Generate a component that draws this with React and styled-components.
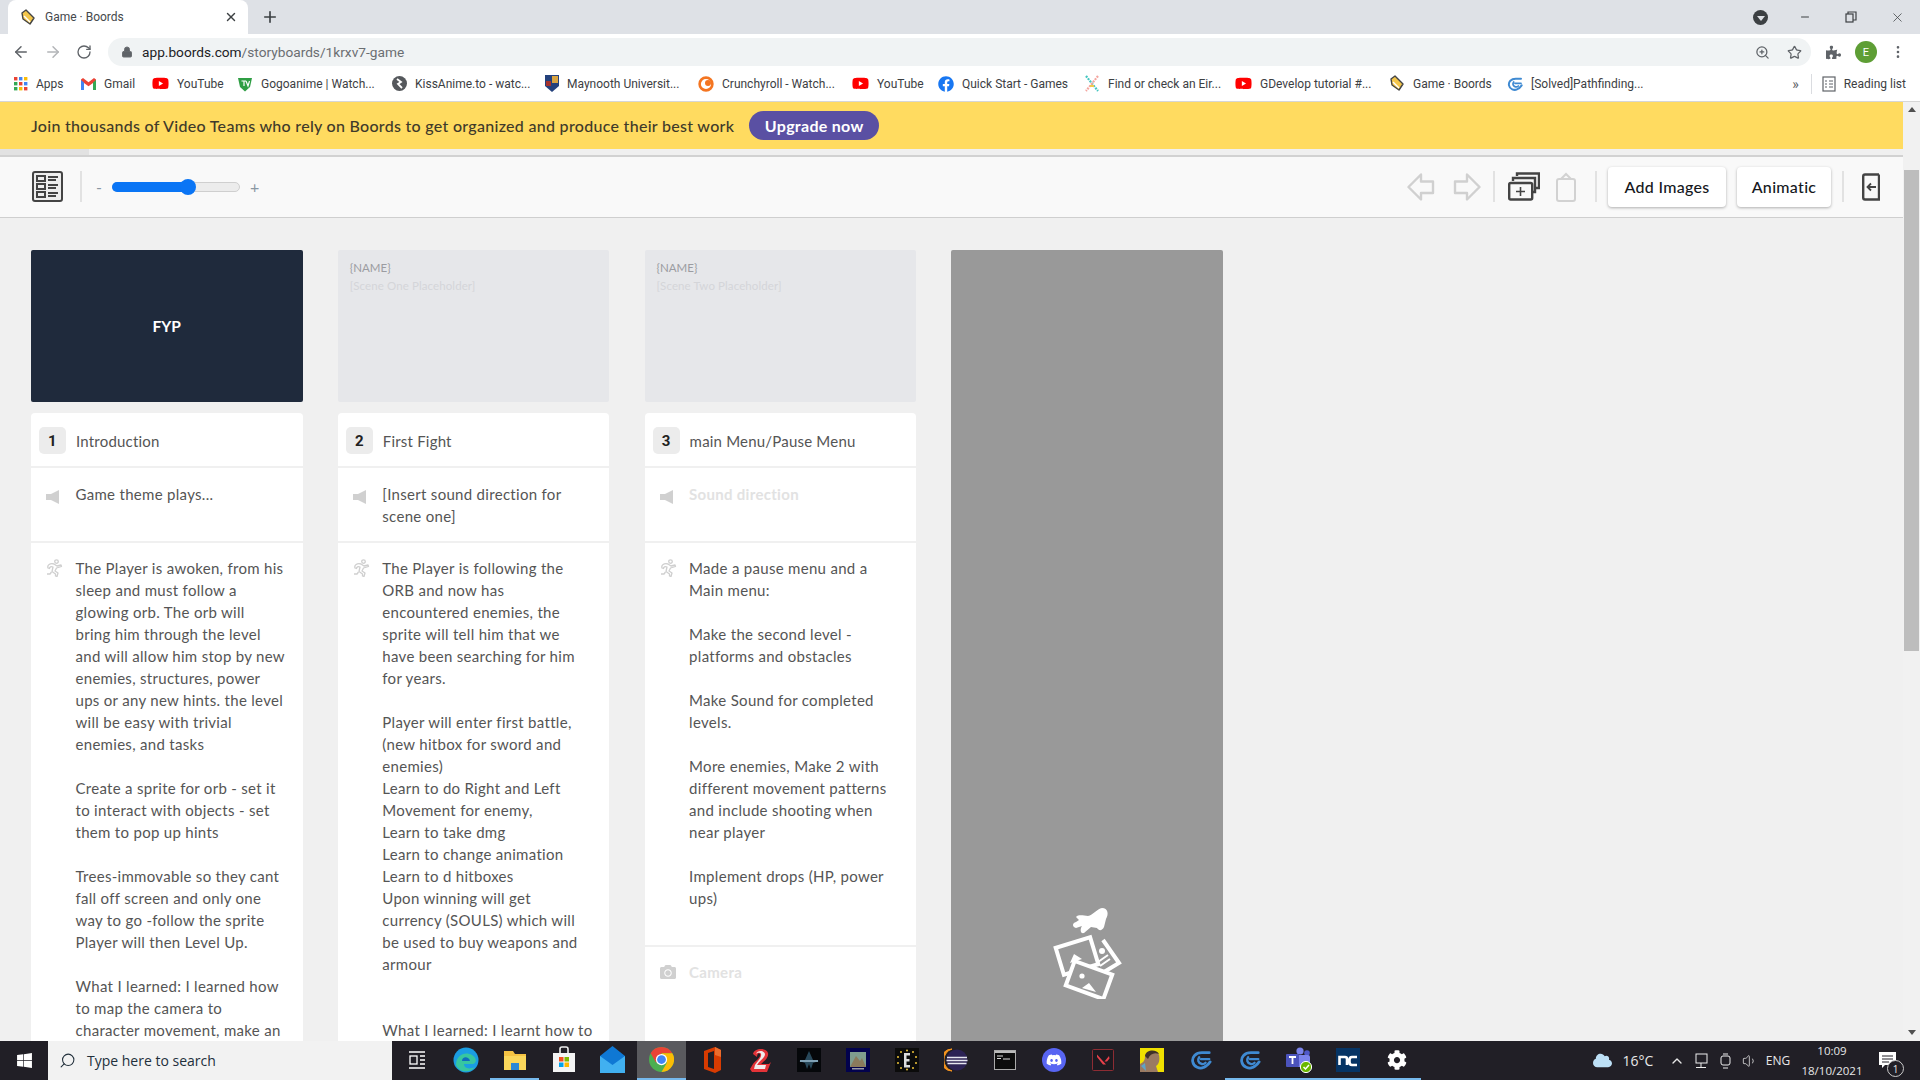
import React from "react";
import styled, { createGlobalStyle } from "styled-components";
import { ArrowLeft, ArrowRight, RotateCw, Lock, Star, ZoomIn, MoreVertical, Plus, X, Minus, Search, ChevronUp, Volume1 } from "lucide-react";
import { FaWindows, FaDiscord, FaFacebook, FaPuzzlePiece, FaCloud, FaCamera, FaYoutube, FaCog } from "react-icons/fa";

const GlobalStyle = createGlobalStyle`
    html, body {
        margin: 0;
        height: 100%;
        overflow: hidden;
        background: #f0f0f0;
    }
    * { box-sizing: border-box; }
`;

const Screen = styled.div`
    width: 1920px;
    height: 1080px;
    display: flex;
    flex-direction: column;
    overflow: hidden;
    font-family: Roboto, "Liberation Sans", sans-serif;
`;

/* browser chrome */
const TabStrip = styled.div`
    height: 34px;
    flex: none;
    background: #dee1e6;
    display: flex;
    align-items: flex-end;
    padding-left: 8px;
`;

const Tab = styled.div`
    width: 240px;
    height: 34px;
    background: #fff;
    border-radius: 8px 8px 0 0;
    display: flex;
    align-items: center;
    padding: 0 10px 0 12px;
    gap: 9px;
    font-size: 12px;
    color: #45484c;
`;

const TabTitle = styled.span`
    flex: 1;
`;

const NewTab = styled.div`
    width: 44px;
    height: 34px;
    display: flex;
    align-items: center;
    justify-content: center;
    color: #3c4043;
`;

const WindowControls = styled.div`
    margin-left: auto;
    height: 34px;
    display: flex;
    align-items: center;
    color: #3c4043;
`;

const ProfileDot = styled.div`
    width: 15px;
    height: 15px;
    border-radius: 50%;
    background: #3c4043;
    margin-right: 14px;
    display: flex;
    align-items: center;
    justify-content: center;
    &::after {
        content: "";
        border-left: 4px solid transparent;
        border-right: 4px solid transparent;
        border-top: 5px solid #dee1e6;
        margin-top: 2px;
    }
`;

const WinButton = styled.div`
    width: 46px;
    display: flex;
    justify-content: center;
`;

const NavBar = styled.div`
    height: 34px;
    flex: none;
    background: #fff;
    display: flex;
    align-items: center;
    padding: 2px 8px 0 12px;
    color: #5f6368;
`;

const NavIcon = styled.div`
    width: 32px;
    display: flex;
    color: ${(p) => (p.$off ? "#b3b5b8" : "#5f6368")};
`;

const Omnibox = styled.div`
    width: 1703px;
    height: 28px;
    border-radius: 14px;
    background: #f0f3f4;
    display: flex;
    align-items: center;
    padding: 0 9px 0 13px;
    font-size: 13.7px;
    color: #6b6e72;
`;

const Host = styled.span`
    color: #202124;
`;

const Url = styled.span`
    flex: 1;
    margin-left: 9px;
`;

const OmniIcon = styled.div`
    display: flex;
    margin-left: ${(p) => p.$ml}px;
    color: #5f6368;
`;

const Avatar = styled.div`
    width: 22px;
    height: 22px;
    border-radius: 50%;
    background: #5e9e35;
    color: #fff;
    font-size: 11px;
    display: flex;
    align-items: center;
    justify-content: center;
    margin: 0 13px 0 14px;
`;

const Bookmarks = styled.div`
    height: 34px;
    flex: none;
    background: #fff;
    display: flex;
    align-items: center;
    padding: 0 0 2px 14px;
    font-size: 12px;
    color: #3c4043;
    border-bottom: 1px solid #d6d6d6;
`;

const Bookmark = styled.div`
    width: ${(p) => p.$w}px;
    flex: none;
    display: flex;
    align-items: center;
    gap: 8px;
    white-space: nowrap;
`;

const BookmarkEnd = styled.div`
    margin-left: auto;
    display: flex;
    align-items: center;
    gap: 8px;
    padding-right: 14px;
`;

const Chevrons = styled.span`
    font-size: 14px;
    color: #5f6368;
    margin-right: 2px;
`;

const BarDivider = styled.div`
    width: 1px;
    height: 20px;
    background: #dadce0;
    margin: 0 2px;
`;

/* page */
const PageRow = styled.div`
    flex: 1;
    min-height: 0;
    display: flex;
`;

const Page = styled.div`
    flex: 1;
    min-width: 0;
    display: flex;
    flex-direction: column;
    font-family: Lato, "Open Sans", sans-serif;
`;

const Banner = styled.div`
    height: 47px;
    flex: none;
    background: #ffdb60;
    display: flex;
    align-items: center;
    padding-left: 31px;
    gap: 15px;
    font-size: 16px;
    font-weight: 500;
    letter-spacing: 0.29px;
    color: #3f3a2a;
`;

const Upgrade = styled.div`
    width: 130px;
    height: 29px;
    border-radius: 15px;
    background: #5a50a3;
    color: #fff;
    font-weight: 700;
    display: flex;
    align-items: center;
    justify-content: center;
`;

const SubNav = styled.div`
    height: 8px;
    flex: none;
    background: #f0f0f0;
    border-bottom: 2px solid #d2d2d2;
`;

const SubNavTab = styled.div`
    width: 89px;
    height: 6px;
    background: #e2e2e2;
`;

const Toolbar = styled.div`
    height: 61px;
    flex: none;
    background: #f9f9f9;
    border-bottom: 1px solid #cfcfcf;
    display: flex;
    align-items: center;
    padding: 0 0 1px 32px;
`;

const ToolDivider = styled.div`
    width: 2px;
    height: 31px;
    background: #e2e2e2;
    margin: ${(p) => p.$m || "0"};
`;

const ZoomMark = styled.span`
    font-size: 16px;
    color: #8a97a3;
    width: ${(p) => p.$w}px;
    margin-left: ${(p) => p.$ml || 0}px;
`;

const SliderTrack = styled.div`
    width: 128px;
    height: 10px;
    border-radius: 5px;
    background: #ececec;
    border: 1px solid #cfcfcf;
    position: relative;
`;

const SliderFill = styled.div`
    height: 10px;
    margin: -1px;
    border-radius: 5px;
    background: #0a75f5;
`;

const SliderThumb = styled.div`
    position: absolute;
    left: 67px;
    top: -4px;
    width: 16px;
    height: 16px;
    border-radius: 50%;
    background: #0a75f5;
`;

const ToolRight = styled.div`
    margin-left: auto;
    display: flex;
    align-items: center;
    padding-right: 23px;
`;

const ToolIcon = styled.div`
    display: flex;
    margin: ${(p) => p.$m || "0"};
`;

const ToolButton = styled.div`
    height: 40px;
    width: ${(p) => p.$w}px;
    background: #fff;
    border-radius: 4px;
    box-shadow: 0 1px 3px rgba(0, 0, 0, 0.3);
    display: flex;
    align-items: center;
    justify-content: center;
    font-size: 16px;
    font-weight: 500;
    letter-spacing: 0.3px;
    color: #16181d;
    margin: ${(p) => p.$m || "0"};
`;

const Board = styled.div`
    flex: 1;
    min-height: 0;
    overflow: hidden;
    display: flex;
    align-items: flex-start;
    gap: 35.3px;
    padding: 32px 0 0 31px;
    background: #f0f0f0;
`;

const Frame = styled.div`
    width: 271.5px;
    flex: none;
`;

const ImageBox = styled.div`
    height: 152px;
    border-radius: 2px;
    background: ${(p) => (p.$dark ? "#1f2a3c" : "#e6e7ea")};
    color: #fff;
    display: flex;
    flex-direction: column;
    align-items: ${(p) => (p.$dark ? "center" : "flex-start")};
    justify-content: ${(p) => (p.$dark ? "center" : "flex-start")};
    padding: ${(p) => (p.$dark ? "0" : "9px 12px")};
    font-size: 15.5px;
    font-weight: 700;
`;

const PlaceName = styled.div`
    font-size: 11.5px;
    font-weight: 400;
    color: #9b9ca1;
    line-height: 18px;
`;

const PlaceScene = styled.div`
    font-size: 11.5px;
    letter-spacing: 0.1px;
    font-weight: 400;
    color: #d4d5d9;
    line-height: 18px;
`;

const CardStack = styled.div`
    margin-top: 11px;
    display: flex;
    flex-direction: column;
    gap: 2px;
`;

const NameRow = styled.div`
    height: 53px;
    background: #fff;
    border-radius: 4px 4px 0 0;
    display: flex;
    align-items: center;
    padding: 2px 0 0 8px;
    gap: 10px;
    font-size: 15px;
    letter-spacing: 0.2px;
    color: #555;
`;

const Badge = styled.div`
    width: 27px;
    height: 27px;
    border-radius: 5px;
    background: #ececec;
    color: #222;
    font-size: 15px;
    font-weight: 700;
    font-family: Roboto, sans-serif;
    display: flex;
    align-items: center;
    justify-content: center;
`;

const Field = styled.div`
    background: #fff;
    min-height: ${(p) => p.$h}px;
    display: flex;
    padding: ${(p) => p.$pt}px 8px 12px 15px;
`;

const FieldIcon = styled.div`
    width: 29.5px;
    flex: none;
    color: #d0d0d0;
    padding-top: ${(p) => p.$pt || 2}px;
`;

const FieldText = styled.div`
    font-size: 15px;
    line-height: 22px;
    letter-spacing: 0.3px;
    color: ${(p) => (p.$empty ? "#e2e2e2" : "#555")};
    font-weight: ${(p) => (p.$empty ? 700 : 400)};
    white-space: pre-line;
    flex: 1;
`;

const DropZone = styled.div`
    width: 271.5px;
    flex: none;
    height: 900px;
    background: #999;
    border-radius: 2px;
    padding-top: 657px;
    display: flex;
    justify-content: center;
`;

/* scrollbar */
const ScrollBar = styled.div`
    width: 17px;
    flex: none;
    background: #f1f1f1;
    display: flex;
    flex-direction: column;
    align-items: center;
    position: relative;
`;

const ScrollArrow = styled.div`
    position: absolute;
    ${(p) => (p.$down ? "bottom: 6px;" : "top: 5px;")}
    border-left: 4px solid transparent;
    border-right: 4px solid transparent;
    ${(p) => (p.$down ? "border-top: 5px solid #505050;" : "border-bottom: 5px solid #505050;")}
`;

const ScrollThumb = styled.div`
    width: 15px;
    height: 481px;
    margin-top: 68px;
    background: #bdbdbd;
`;

/* taskbar */
const Taskbar = styled.div`
    height: 39px;
    flex: none;
    background: #211f26;
    display: flex;
    align-items: stretch;
    color: #fff;
    font-family: "Open Sans", Roboto, sans-serif;
`;

const StartButton = styled.div`
    width: 48px;
    display: flex;
    align-items: center;
    justify-content: center;
`;

const SearchBox = styled.div`
    width: 344px;
    background: #f2f2f2;
    display: flex;
    align-items: center;
    padding-left: 11px;
    gap: 11px;
    color: #22303c;
    font-size: 14px;
`;

const Slot = styled.div`
    width: 49px;
    flex: none;
    display: flex;
    align-items: center;
    justify-content: center;
    position: relative;
    background: ${(p) => (p.$active ? "#5a5a5e" : "transparent")};
    border-bottom: 2px solid ${(p) => (p.$open || p.$active ? "#76b9ed" : "transparent")};
`;

const DiscordBadge = styled.span`
    width: 24px;
    height: 24px;
    border-radius: 50%;
    background: #5865f2;
    display: flex;
    align-items: center;
    justify-content: center;
`;

const Tray = styled.div`
    margin-left: auto;
    display: flex;
    align-items: center;
    padding-right: 16px;
    font-size: 12px;
    color: #e8e8e8;
`;

const TrayItem = styled.div`
    display: flex;
    align-items: center;
    justify-content: center;
    width: ${(p) => p.$w}px;
    font-size: ${(p) => p.$fs || 12}px;
`;

const Clock = styled.div`
    width: 76px;
    text-align: center;
    font-size: 11.5px;
    line-height: 20px;
`;

const Notify = styled.div`
    width: 34px;
    display: flex;
    justify-content: center;
    position: relative;
`;

const NotifyCount = styled.div`
    position: absolute;
    right: 0;
    bottom: -8px;
    width: 17px;
    height: 17px;
    border-radius: 50%;
    border: 1px solid #ccc;
    background: #211f26;
    font-size: 10px;
    display: flex;
    align-items: center;
    justify-content: center;
`;

/* drawn favicons */
const BoordsIcon = () => (
    <svg width="16" height="17" viewBox="0 0 16 17">
        <path d="M6 1 L14 9 L10 15 L3 10 L2 4 Z" fill="#f4c64a" stroke="#444" strokeWidth="1.4" strokeLinejoin="round" />
        <path d="M4 7 L10 13" stroke="#fff" strokeWidth="1.4" />
    </svg>
);

const AppsIcon = () => (
    <svg width="14" height="14" viewBox="0 0 14 14">
        {[0, 5, 10].map((y, r) =>
            [0, 5, 10].map((x, c) => (
                <rect key={x + "-" + y} x={x} y={y} width="3.4" height="3.4" fill={["#ea4335", "#4285f4", "#fbbc05", "#34a853", "#ea4335", "#4285f4", "#34a853", "#fbbc05", "#ea4335"][r * 3 + c]} />
            ))
        )}
    </svg>
);

const GmailIcon = () => (
    <svg width="15" height="12" viewBox="0 0 15 12">
        <path d="M0 1.5 V12 H3 V5 L7.5 8.3 L12 5 V12 H15 V1.5 L13 0 L7.5 4.2 L2 0 Z" fill="#ea4335" />
        <path d="M0 12 V2 L3 4.5 V12 Z" fill="#4285f4" />
        <path d="M15 12 V2 L12 4.5 V12 Z" fill="#34a853" />
    </svg>
);

const YtIcon = () => <FaYoutube size={17} color="#f00" />;

const ShieldIcon = () => (
    <svg width="16" height="16" viewBox="0 0 16 16">
        <path d="M1 2 H15 L13 11 L8 15.5 L3 11 Z" fill="#2f9e44" />
        <path d="M4.5 5 H9 M7 5 V10 M9 5 L11 10 L12.5 5" stroke="#fff" strokeWidth="1.2" fill="none" />
    </svg>
);

const KissIcon = () => (
    <svg width="15" height="15" viewBox="0 0 15 15">
        <circle cx="7.5" cy="7.5" r="7.5" fill="#55585c" />
        <path d="M5 3 L9 6 L6 8 L10 12" stroke="#fff" strokeWidth="1.8" fill="none" />
    </svg>
);

const CrestIcon = () => (
    <svg width="14" height="17" viewBox="0 0 14 17">
        <path d="M0 0 H14 V11 L7 17 L0 11 Z" fill="#24417c" />
        <rect x="7" y="1" width="6" height="7" fill="#d9a441" />
        <rect x="1" y="6" width="5" height="5" fill="#a5332d" />
    </svg>
);

const CrunchyIcon = () => (
    <svg width="16" height="16" viewBox="0 0 16 16">
        <circle cx="8" cy="8" r="6.4" fill="none" stroke="#f47521" strokeWidth="2.6" />
        <circle cx="10" cy="7" r="3" fill="#f47521" />
    </svg>
);

const EircodeIcon = () => (
    <svg width="16" height="17" viewBox="0 0 16 17">
        <path d="M2 1 L14 16" stroke="#45c6c0" strokeWidth="2.2" strokeDasharray="2 1" />
        <path d="M14 1 L2 16" stroke="#f4a6a0" strokeWidth="2.2" strokeDasharray="2 1" />
        <path d="M6 11 L10 11" stroke="#f4c94a" strokeWidth="2" />
    </svg>
);

const GDevelopIcon = ({ size = 16 }) => (
    <svg width={size} height={size} viewBox="0 0 24 24" fill="none" stroke="#3f8ad2" strokeWidth="3" strokeLinecap="round">
        <path d="M21 4 H13 C6 4 2 9 3 14 C4 20 11 22 15 20 C18 19 20 17 22 14" />
        <path d="M12 11 H21 M10 9 C8 12 9 15 12 16 C14 17 16 16 17 15" strokeWidth="2.6" />
    </svg>
);

const ViewIcon = () => (
    <svg width="31" height="31" viewBox="0 0 31 31" fill="none">
        <rect x="1" y="1" width="29" height="29" rx="2" fill="#eee" stroke="#444" strokeWidth="2" />
        <g stroke="#444" strokeWidth="2">
            <rect x="5" y="5" width="8" height="5" />
            <rect x="5" y="13" width="8" height="5" />
            <rect x="5" y="21" width="8" height="5" />
            <path d="M16 6 H26 M16 9 H24 M16 14 H26 M16 17 H24 M16 22 H26 M16 25 H24" />
        </g>
    </svg>
);

const ArrowShape = ({ flip }) => (
    <svg width="28" height="28" viewBox="0 0 28 28" fill="none" style={flip ? { transform: "scaleX(-1)" } : undefined}>
        <path d="M14 1.5 L1.5 14 L14 26.5 V20 H26 V8.5 H14 Z" stroke="#d0d0d0" strokeWidth="2.4" strokeLinejoin="round" />
    </svg>
);

const StackIcon = () => (
    <svg width="32" height="29" viewBox="0 0 32 29" fill="none" stroke="#444" strokeWidth="2.4">
        <path d="M9 4 V1.5 H31 V16 H28" />
        <path d="M5 9 V6 H27 V20 H24" />
        <rect x="1.2" y="11" width="23" height="16.5" rx="1.5" fill="#f9f9f9" />
        <path d="M12.5 15 V24 M8 19.5 H17" strokeWidth="1.6" />
    </svg>
);

const ClipIcon = () => (
    <svg width="22" height="30" viewBox="0 0 22 30" fill="none" stroke="#d2d2d2" strokeWidth="2">
        <rect x="2" y="7" width="18" height="22" rx="2" />
        <path d="M6 7 L11 2 L16 7" />
    </svg>
);

const PanelIcon = () => (
    <svg width="18" height="28" viewBox="0 0 18 28" fill="none" stroke="#444" strokeWidth="2.4">
        <path d="M17 1.5 H3 Q1.2 1.5 1.2 3.5 V24.5 Q1.2 26.5 3 26.5 H17 V1.5" />
        <path d="M14 14 H6 M9 10.5 L5.5 14 L9 17.5" strokeWidth="1.8" />
    </svg>
);

const DropArt = () => (
    <svg width="70" height="92" viewBox="0 0 70 92" fill="none" stroke="#fff">
        <path d="M50 1 C56 1 57 7 54 12 L52 20 C50 24 47 24 45 21 L39 20 L32 26 C28 27 28 22 30 19 L24 21 C20 20 20 16 24 15 L27 13 L24 10 C27 7 32 9 36 9 C41 8 45 2 50 1 Z" fill="#fff" stroke="none" />
        <g strokeWidth="4">
            <path d="M51 33 L67 56 L52 65" />
            <rect x="7" y="35" width="36" height="28" transform="rotate(-17 25 49)" fill="#999" />
            <rect x="17" y="60" width="40" height="26" transform="rotate(20 37 73)" fill="#999" />
        </g>
        <path d="M37 76 L44 85 L30 81 Z M22 47 L30 52 L18 56 Z" fill="#fff" stroke="none" />
        <circle cx="30" cy="69" r="2.6" fill="#fff" stroke="none" />
        <circle cx="50" cy="44" r="3" fill="#fff" stroke="none" />
        <path d="M46 55 L56 48 M48 59 L58 52" strokeWidth="2" />
    </svg>
);

const EdgeIcon = () => (
    <svg width="26" height="26" viewBox="0 0 26 26">
        <circle cx="13" cy="13" r="12.5" fill="#1b9de2" />
        <path d="M3 18 C3 8 12 4 19 8 C24 11 24 16 20 17 L11 17 C11 21 16 23 22 20 C18 26 6 26 3 18 Z" fill="#37c6a0" />
        <path d="M9 14 C9 9 16 9 17 14 Z" fill="#0f6cbd" />
    </svg>
);

const FolderIcon = () => (
    <svg width="24" height="24" viewBox="0 0 24 24">
        <path d="M1 3 H10 L12 6 H23 V22 H1 Z" fill="#f6c343" />
        <rect x="1" y="8" width="22" height="14" fill="#fbd75b" />
        <rect x="8" y="15" width="8" height="7" fill="#2b88d8" />
    </svg>
);

const StoreIcon = () => (
    <svg width="24" height="27" viewBox="0 0 24 27">
        <path d="M8 7 V3 Q8 1 10 1 H14 Q16 1 16 3 V7" fill="none" stroke="#eee" strokeWidth="1.6" />
        <rect x="1" y="7" width="22" height="19" fill="#f4f4f4" />
        <rect x="7" y="11" width="4.5" height="4.5" fill="#f25022" />
        <rect x="12.5" y="11" width="4.5" height="4.5" fill="#7fba00" />
        <rect x="7" y="16.5" width="4.5" height="4.5" fill="#00a4ef" />
        <rect x="12.5" y="16.5" width="4.5" height="4.5" fill="#ffb900" />
    </svg>
);

const MailIcon = () => (
    <svg width="25" height="27" viewBox="0 0 25 27">
        <path d="M0 10 L12.5 0 L25 10 V27 H0 Z" fill="#0f78d4" />
        <path d="M0 10 L12.5 19 L25 10 V27 H0 Z" fill="#41b0f0" />
    </svg>
);

const ChromeIcon = () => (
    <svg width="25" height="25" viewBox="0 0 24 24">
        <circle cx="12" cy="12" r="12" fill="#4caf50" />
        <path d="M12 0 A12 12 0 0 1 22.4 6 L12 6 Z M1.6 6 A12 12 0 0 1 12 0 L12 6 L6.8 15 Z" fill="#ea4335" />
        <path d="M22.4 6 A12 12 0 0 1 12 24 L17.2 15 L12 6 Z" fill="#fbbc05" />
        <circle cx="12" cy="12" r="5.4" fill="#fff" />
        <circle cx="12" cy="12" r="4.2" fill="#4285f4" />
    </svg>
);

const OfficeIcon = () => (
    <svg width="20" height="26" viewBox="0 0 20 26">
        <path d="M3 4 L14 0 L20 3 V23 L14 26 L3 22 Z" fill="#d83b01" />
        <path d="M7 6 L13 4 V22 L7 20 Z" fill="#211f26" />
        <path d="M14 0 L20 3 V10 L14 8 Z" fill="#eb6c2d" />
    </svg>
);

const GuildIcon = () => (
    <svg width="24" height="26" viewBox="0 0 24 26">
        <path d="M5 7 C6 1 18 0 20 6 C21 11 16 14 13 17 H21 L23 15 L19 25 H4 L2 22 L5 17 C8 13 13 11 12 7 C11 5 9 7 9 10 Z" fill="#e33338" />
        <path d="M8 7 C9 3 16 3 17 7 C17 11 12 13 9 18 H18 L17 22 H6 L7 18 C10 14 14 10 13 7 C12 5 9 6 8 7 Z" fill="#f1ecec" />
    </svg>
);

const StarPoster = () => (
    <svg width="24" height="24" viewBox="0 0 24 24">
        <rect width="24" height="24" fill="#05070a" />
        <path d="M12 3 L16 12 L22 13 L16 15 L14 21 L12 16 L10 21 L8 15 L2 13 L8 12 Z" fill="#28485a" />
        <rect x="3" y="12" width="18" height="2" fill="#7fa0b4" />
    </svg>
);

const ArkPoster = () => (
    <svg width="24" height="24" viewBox="0 0 24 24">
        <rect width="24" height="24" fill="#02024d" />
        <rect x="4" y="4" width="16" height="15" fill="#7e9c8e" />
        <path d="M4 19 L10 8 L14 13 L16 10 L20 19 Z" fill="#8a7a5c" />
        <rect x="6" y="20" width="12" height="1.5" fill="#9a9aa5" />
    </svg>
);

const EtsIcon = () => (
    <svg width="24" height="24" viewBox="0 0 24 24">
        <rect width="24" height="24" fill="#0b0b0b" />
        <path d="M9 5 H15 V7.5 H11.5 V11 H14.5 V13.5 H11.5 V17 H15 V19.5 H9 Z" fill="#ddd" />
        <g fill="#eec33a">
            <circle cx="12" cy="2.5" r="1" /><circle cx="12" cy="21.5" r="1" />
            <circle cx="6" cy="4" r="1" /><circle cx="18" cy="4" r="1" />
            <circle cx="3" cy="9" r="1" /><circle cx="21" cy="9" r="1" />
            <circle cx="3" cy="15" r="1" /><circle cx="21" cy="15" r="1" />
            <circle cx="6" cy="20" r="1" /><circle cx="18" cy="20" r="1" />
        </g>
    </svg>
);

const EclipseIcon = () => (
    <svg width="24" height="24" viewBox="0 0 24 24">
        <path d="M8 1 A11.5 11.5 0 0 0 8 23 A11 11 0 0 1 8 1 Z" fill="#f7941e" stroke="#f7941e" />
        <circle cx="13" cy="12" r="10.5" fill="#2c2255" />
        <path d="M3 9.5 H23 M2.5 12.5 H23.5 M3.5 15.5 H22.5" stroke="#e6e6f0" strokeWidth="1.3" />
    </svg>
);

const TerminalIcon = () => (
    <svg width="22" height="20" viewBox="0 0 22 20">
        <rect x="0.5" y="0.5" width="21" height="19" fill="#0c0c0c" stroke="#aaa" />
        <rect x="1" y="1" width="20" height="2" fill="#bbb" />
        <path d="M3 6 H9 M3 8.5 H7 M9 9 H16" stroke="#ddd" strokeWidth="1" />
    </svg>
);

const ValorantIcon = () => (
    <svg width="22" height="22" viewBox="0 0 22 22">
        <rect x="0.5" y="0.5" width="21" height="21" rx="1" fill="#1c1a20" stroke="#8d2c33" />
        <path d="M5 8 L11 15.5 H14 L5 5.5 Z M17 7 L12.5 12.5 H15 L17.5 9.5 Z" fill="#e8404a" />
    </svg>
);

const FaceIcon = () => (
    <svg width="24" height="24" viewBox="0 0 24 24">
        <rect width="24" height="24" fill="#f0e000" />
        <path d="M0 24 V16 C4 14 5 12 5 8 C6 2 17 1 19 7 C20 12 19 16 16 18 L18 24 Z" fill="#9a7a62" />
        <path d="M5 8 C6 1 17 1 19 6 C14 4 10 6 8 11 Z" fill="#3f3127" />
        <path d="M1 18 L5 15 L6 23 Z" fill="#5fa4c8" />
    </svg>
);

const TeamsIcon = () => (
    <svg width="26" height="26" viewBox="0 0 26 26">
        <circle cx="14" cy="4" r="3.6" fill="#7b83eb" />
        <circle cx="21" cy="6" r="2.8" fill="#5059c9" />
        <rect x="9" y="8" width="15" height="12" rx="2" fill="#7b83eb" />
        <rect x="0" y="7" width="13" height="13" rx="1" fill="#4b53bc" />
        <path d="M3 10 H10 M6.5 10 V17" stroke="#fff" strokeWidth="1.8" />
        <circle cx="20" cy="20" r="5.6" fill="#6bb700" stroke="#fff" />
        <path d="M17.5 20 L19.5 22 L23 18" stroke="#fff" strokeWidth="1.5" fill="none" />
    </svg>
);

const NcIcon = () => (
    <svg width="24" height="24" viewBox="0 0 24 24">
        <rect width="24" height="24" fill="#063464" />
        <path d="M3.5 17 V9 H9 Q11 9 11 11 V17 M21 9 H16 Q13.5 9 13.5 12 V14 Q13.5 17 16 17 H21" stroke="#fff" strokeWidth="2.6" fill="none" />
    </svg>
);

const SpeakerIcon = () => (
    <svg width="13" height="14" viewBox="0 0 13 14">
        <path d="M0 4 H5 L13 0 V14 L5 10 H0 Z" fill="currentColor" />
    </svg>
);

const RunIcon = () => (
    <svg width="17" height="18" viewBox="0 0 17 18" fill="none" stroke="#cfcfcf" strokeWidth="1.3" strokeLinejoin="round">
        <circle cx="10.5" cy="2.6" r="1.8" />
        <path d="M2 9 C1 6 4 4 8 5 L11 7 L15 6 L15.5 7.5 L10.5 9 L9 12 L12 14 L11 17.5 L9.5 17 L9.5 15 L6 12.5 L7 8 C5 7 3.5 8 3.5 9.5 Z" />
        <path d="M5.5 13 L4 15 L1 15" />
    </svg>
);

const bookmarks = [
    { w: 67, label: "Apps", icon: <AppsIcon /> },
    { w: 71, label: "Gmail", icon: <GmailIcon /> },
    { w: 85, label: "YouTube", icon: <YtIcon /> },
    { w: 155, label: "Gogoanime | Watch...", icon: <ShieldIcon /> },
    { w: 153, label: "KissAnime.to - watc...", icon: <KissIcon /> },
    { w: 153, label: "Maynooth Universit...", icon: <CrestIcon /> },
    { w: 154, label: "Crunchyroll - Watch...", icon: <CrunchyIcon /> },
    { w: 86, label: "YouTube", icon: <YtIcon /> },
    { w: 146, label: "Quick Start - Games", icon: <FaFacebook size={16} color="#1877f2" /> },
    { w: 151, label: "Find or check an Eir...", icon: <EircodeIcon /> },
    { w: 154, label: "GDevelop tutorial #...", icon: <YtIcon /> },
    { w: 118, label: "Game · Boords", icon: <BoordsIcon /> },
    { w: 150, label: "[Solved]Pathfinding...", icon: <GDevelopIcon /> },
];

const taskIcons = [
    { icon: <svg width="16" height="18" viewBox="0 0 16 18" fill="none" stroke="#fff" strokeWidth="1.3"><path d="M0 1 H16 M0 17 H16" /><rect x="1" y="5" width="7" height="8" /><path d="M11 5 H16 M11 9 H16 M11 13 H16" /></svg> },
    { icon: <EdgeIcon /> },
    { icon: <FolderIcon />, open: true },
    { icon: <StoreIcon /> },
    { icon: <MailIcon /> },
    { icon: <ChromeIcon />, active: true },
    { icon: <OfficeIcon /> },
    { icon: <GuildIcon /> },
    { icon: <StarPoster /> },
    { icon: <ArkPoster /> },
    { icon: <EtsIcon /> },
    { icon: <EclipseIcon /> },
    { icon: <TerminalIcon /> },
    { icon: <DiscordBadge><FaDiscord size={16} color="#fff" /></DiscordBadge> },
    { icon: <ValorantIcon /> },
    { icon: <FaceIcon /> },
    { icon: <GDevelopIcon size={22} /> },
    { icon: <GDevelopIcon size={22} />, open: true },
    { icon: <TeamsIcon />, open: true },
    { icon: <NcIcon />, open: true },
    { icon: <FaCog size={20} color="#fff" />, open: true },
];

const frames = [
    {
        number: 1,
        name: "Introduction",
        sound: "Game theme plays...",
        action: `The Player is awoken, from his
sleep and must follow a
glowing orb. The orb will
bring him through the level
and will allow him stop by new
enemies, structures, power
ups or any new hints. the level
will be easy with trivial
enemies, and tasks

Create a sprite for orb - set it
to interact with objects - set
them to pop up hints

Trees-immovable so they cant
fall off screen and only one
way to go -follow the sprite
Player will then Level Up.

What I learned: I learned how
to map the camera to
character movement, make an`,
    },
    {
        number: 2,
        name: "First Fight",
        sound: "[Insert sound direction for\nscene one]",
        placeholder: "[Scene One Placeholder]",
        action: `The Player is following the
ORB and now has
encountered enemies, the
sprite will tell him that we
have been searching for him
for years.

Player will enter first battle,
(new hitbox for sword and
enemies)
Learn to do Right and Left
Movement for enemy,
Learn to take dmg
Learn to change animation
Learn to d hitboxes
Upon winning will get
currency (SOULS) which will
be used to buy weapons and
armour


What I learned: I learnt how to`,
    },
    {
        number: 3,
        name: "main Menu/Pause Menu",
        soundEmpty: "Sound direction",
        placeholder: "[Scene Two Placeholder]",
        action: `Made a pause menu and a
Main menu:

Make the second level -
platforms and obstacles

Make Sound for completed
levels.

More enemies, Make 2 with
different movement patterns
and include shooting when
near player

Implement drops (HP, power
ups)`,
        camera: "Camera",
    },
];

const FrameCard = ({ frame }) => (
    <Frame>
        {frame.placeholder ? (
            <ImageBox>
                <PlaceName>{"{NAME}"}</PlaceName>
                <PlaceScene>{frame.placeholder}</PlaceScene>
            </ImageBox>
        ) : (
            <ImageBox $dark>FYP</ImageBox>
        )}
        <CardStack>
            <NameRow>
                <Badge>{frame.number}</Badge>
                {frame.name}
            </NameRow>
            <Field $h={73} $pt={15}>
                <FieldIcon $pt={5}><SpeakerIcon /></FieldIcon>
                <FieldText $empty={!frame.sound}>{frame.sound || frame.soundEmpty}</FieldText>
            </Field>
            <Field $h={frame.camera ? 402 : 600} $pt={14}>
                <FieldIcon><RunIcon /></FieldIcon>
                <FieldText>{frame.action}</FieldText>
            </Field>
            {frame.camera && (
                <Field $h={100} $pt={14}>
                    <FieldIcon $pt={3}><FaCamera size={16} /></FieldIcon>
                    <FieldText $empty>{frame.camera}</FieldText>
                </Field>
            )}
        </CardStack>
    </Frame>
);

const App = () => (
    <Screen>
        <GlobalStyle />
        <TabStrip>
            <Tab>
                <BoordsIcon />
                <TabTitle>Game · Boords</TabTitle>
                <X size={14} color="#3c4043" strokeWidth={2.4} />
            </Tab>
            <NewTab><Plus size={18} strokeWidth={2.2} /></NewTab>
            <WindowControls>
                <ProfileDot />
                <WinButton><Minus size={12} /></WinButton>
                <WinButton>
                    <svg width="12" height="12" viewBox="0 0 12 12" fill="none" stroke="#3c4043" strokeWidth="1.2"><rect x="1" y="3" width="7" height="8" /><path d="M3 3 V1 H11 V9 H8" /></svg>
                </WinButton>
                <WinButton><X size={15} strokeWidth={1.2} /></WinButton>
            </WindowControls>
        </TabStrip>
        <NavBar>
            <NavIcon><ArrowLeft size={18} /></NavIcon>
            <NavIcon $off><ArrowRight size={18} /></NavIcon>
            <NavIcon><RotateCw size={16} /></NavIcon>
            <Omnibox>
                <Lock size={12} fill="#5f6368" />
                <Url><Host>app.boords.com</Host>/storyboards/1krxv7-game</Url>
                <OmniIcon $ml={0}><ZoomIn size={15} /></OmniIcon>
                <OmniIcon $ml={17}><Star size={15} /></OmniIcon>
            </Omnibox>
            <OmniIcon $ml={15}><FaPuzzlePiece size={15} /></OmniIcon>
            <Avatar>E</Avatar>
            <MoreVertical size={16} />
        </NavBar>
        <Bookmarks>
            {bookmarks.map((b, i) => (
                <Bookmark key={i} $w={b.w}>{b.icon}{b.label}</Bookmark>
            ))}
            <BookmarkEnd>
                <Chevrons>»</Chevrons>
                <BarDivider />
                <svg width="14" height="16" viewBox="0 0 14 16" fill="none" stroke="#5f6368" strokeWidth="1.2"><rect x="1" y="1" width="12" height="14" /><path d="M3 5 H5 M7 5 H11 M3 8 H5 M7 8 H11 M3 11 H5 M7 11 H11" /></svg>
                Reading list
            </BookmarkEnd>
        </Bookmarks>
        <PageRow>
            <Page>
                <Banner>
                    Join thousands of Video Teams who rely on Boords to get organized and produce their best work
                    <Upgrade>Upgrade now</Upgrade>
                </Banner>
                <SubNav><SubNavTab /></SubNav>
                <Toolbar>
                    <ViewIcon />
                    <ToolDivider $m="0 14px 0 17px" />
                    <ZoomMark $w={16}>-</ZoomMark>
                    <SliderTrack>
                        <SliderFill style={{ width: 78 }} />
                        <SliderThumb />
                    </SliderTrack>
                    <ZoomMark $w={20} $ml={10}>+</ZoomMark>
                    <ToolRight>
                        <ToolIcon><ArrowShape /></ToolIcon>
                        <ToolIcon $m="0 0 0 18px"><ArrowShape flip /></ToolIcon>
                        <ToolDivider $m="0 13px 0 12px" />
                        <ToolIcon><StackIcon /></ToolIcon>
                        <ToolIcon $m="0 0 0 15px"><ClipIcon /></ToolIcon>
                        <ToolDivider $m="0 11px 0 18px" />
                        <ToolButton $w={118}>Add Images</ToolButton>
                        <ToolButton $w={94} $m="0 0 0 11px">Animatic</ToolButton>
                        <ToolDivider $m="0 18px 0 11px" />
                        <ToolIcon><PanelIcon /></ToolIcon>
                    </ToolRight>
                </Toolbar>
                <Board>
                    {frames.map((f) => <FrameCard key={f.number} frame={f} />)}
                    <DropZone><DropArt /></DropZone>
                </Board>
            </Page>
            <ScrollBar>
                <ScrollArrow />
                <ScrollThumb />
                <ScrollArrow $down />
            </ScrollBar>
        </PageRow>
        <Taskbar>
            <StartButton><FaWindows size={17} /></StartButton>
            <SearchBox>
                <Search size={17} strokeWidth={1.5} style={{ transform: "scaleX(-1)" }} />
                Type here to search
            </SearchBox>
            {taskIcons.map((t, i) => (
                <Slot key={i} $open={t.open} $active={t.active}>{t.icon}</Slot>
            ))}
            <Tray>
                <TrayItem $w={19}><FaCloud size={19} color="#bcdff5" /></TrayItem>
                <TrayItem $w={52} $fs={14}>16°C</TrayItem>
                <TrayItem $w={26}><ChevronUp size={16} /></TrayItem>
                <TrayItem $w={24}>
                    <svg width="16" height="16" viewBox="0 0 16 16" fill="none" stroke="#eee"><rect x="2" y="1" width="11" height="9" /><path d="M7 10 V14 M2 14.5 H12" /></svg>
                </TrayItem>
                <TrayItem $w={24}>
                    <svg width="12" height="16" viewBox="0 0 12 16" fill="none" stroke="#eee"><rect x="1" y="3" width="9" height="9" rx="2" /><path d="M3 1 H8 M3 15 H8" /></svg>
                </TrayItem>
                <TrayItem $w={24}><Volume1 size={16} strokeWidth={1.2} /></TrayItem>
                <TrayItem $w={32}>ENG</TrayItem>
                <Clock>10:09<br />18/10/2021</Clock>
                <Notify>
                    <svg width="17" height="17" viewBox="0 0 17 17"><path d="M0 0 H17 V13 H6 L3 16 V13 H0 Z" fill="#fff" /><path d="M3 4 H14 M3 7 H14 M3 10 H10" stroke="#211f26" /></svg>
                    <NotifyCount>1</NotifyCount>
                </Notify>
            </Tray>
        </Taskbar>
    </Screen>
);

export default App;
